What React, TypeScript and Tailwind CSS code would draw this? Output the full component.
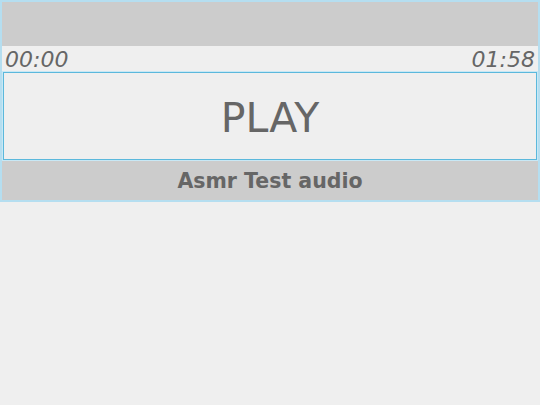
import React from 'react';

const App: React.FC = () => {
  return (
    <div className="w-[540px] h-[405px] bg-[#efefef] font-['DejaVu_Sans',Verdana,sans-serif]">
      <div className="border-2 border-[#b5def0] flex flex-col">
        <div className="h-[44px] bg-[#cccccc]" />
        <div className="h-[26px] flex items-end justify-between px-[3px] pb-[1px] text-[22px] italic text-[#666666] leading-none">
          <span>00:00</span>
          <span>01:58</span>
        </div>
        <button className="mx-px h-[88px] pt-[4px] border border-[#5bb8dc] shadow-[0_0_0_1px_#c8e8f5] bg-[#efefef] flex items-center justify-center text-[41px] text-[#666666] leading-none">
          PLAY
        </button>
        <div className="h-[39px] mt-px pt-[2px] bg-[#cccccc] flex items-center justify-center text-[20.5px] font-bold text-[#666666]">
          Asmr Test audio
        </div>
      </div>
    </div>
  );
};

export default App;
